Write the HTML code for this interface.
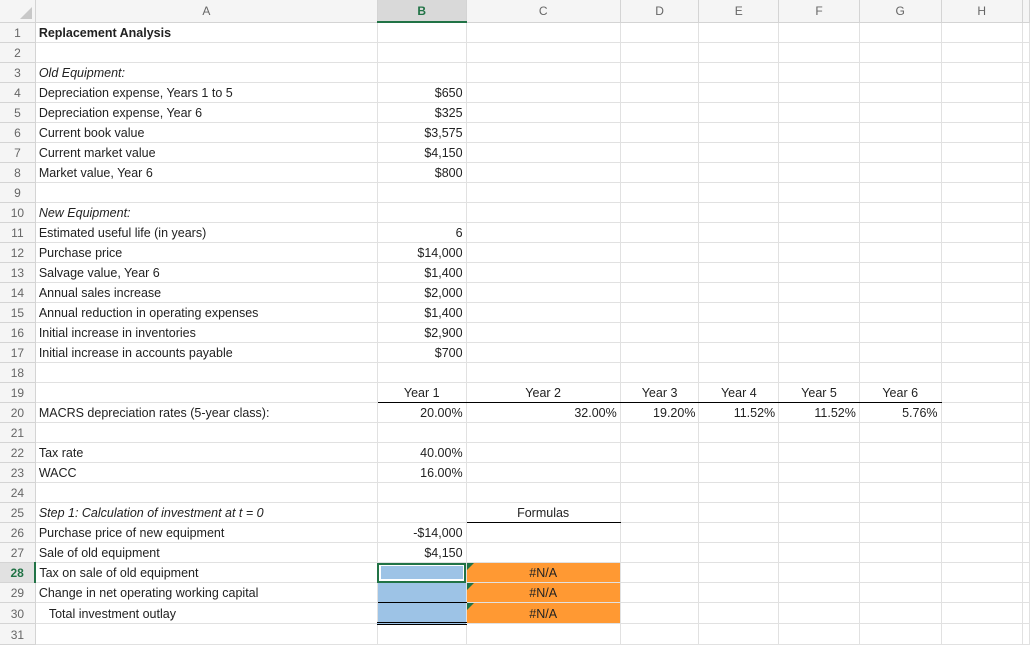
<!DOCTYPE html>
<html><head><meta charset="utf-8"><style>
body{margin:0;width:1031px;height:635px;overflow:hidden;background:#fff;font-family:"Liberation Sans",Arial,sans-serif;font-size:12.5px;color:#222}
table{border-collapse:collapse;table-layout:fixed;position:absolute;left:-1px;top:-1px}
td{border:1px solid #e1e1e1;height:19px;padding:0 3px;white-space:nowrap;overflow:visible;vertical-align:bottom;line-height:18px}
tr.h td{height:21px;background:#f5f5f5;color:#666;text-align:center;font-size:12px;vertical-align:middle;border-color:#d4d4d4}
td.n{background:#f5f5f5;color:#666;text-align:center;font-size:12px;border-color:#d4d4d4;padding:0}
.r{text-align:right}.c{text-align:center}.i{font-style:italic}.b{font-weight:bold}
.ul{border-bottom:1px solid #000}
.blue{background:#9dc3e6}
.or{background:#ff9933;text-align:center;position:relative}
.or::before{content:"";position:absolute;left:0;top:0;border-top:7px solid #217346;border-right:7px solid transparent}
</style></head><body>
<table>
<colgroup><col style="width:36px"><col style="width:343px"><col style="width:89px"><col style="width:155px"><col style="width:79px"><col style="width:80px"><col style="width:81px"><col style="width:82px"><col style="width:82px"><col style="width:5px"></colgroup>
<tr class="h"><td style="position:relative"><div style="position:absolute;right:3px;bottom:3px;border-bottom:12px solid #c8c8c8;border-left:12px solid transparent"></div></td><td>A</td><td style="background:#d9d9d9;color:#217346;font-weight:bold;border-bottom:2px solid #217346">B</td><td>C</td><td>D</td><td>E</td><td>F</td><td>G</td><td>H</td><td></td></tr>
<tr><td class="n">1</td><td class="b">Replacement Analysis</td><td></td><td></td><td></td><td></td><td></td><td></td><td></td><td></td></tr>
<tr><td class="n">2</td><td></td><td></td><td></td><td></td><td></td><td></td><td></td><td></td><td></td></tr>
<tr><td class="n">3</td><td class="i">Old Equipment:</td><td></td><td></td><td></td><td></td><td></td><td></td><td></td><td></td></tr>
<tr><td class="n">4</td><td>Depreciation expense, Years 1 to 5</td><td class="r">$650</td><td></td><td></td><td></td><td></td><td></td><td></td><td></td></tr>
<tr><td class="n">5</td><td>Depreciation expense, Year 6</td><td class="r">$325</td><td></td><td></td><td></td><td></td><td></td><td></td><td></td></tr>
<tr><td class="n">6</td><td>Current book value</td><td class="r">$3,575</td><td></td><td></td><td></td><td></td><td></td><td></td><td></td></tr>
<tr><td class="n">7</td><td>Current market value</td><td class="r">$4,150</td><td></td><td></td><td></td><td></td><td></td><td></td><td></td></tr>
<tr><td class="n">8</td><td>Market value, Year 6</td><td class="r">$800</td><td></td><td></td><td></td><td></td><td></td><td></td><td></td></tr>
<tr><td class="n">9</td><td></td><td></td><td></td><td></td><td></td><td></td><td></td><td></td><td></td></tr>
<tr><td class="n">10</td><td class="i">New Equipment:</td><td></td><td></td><td></td><td></td><td></td><td></td><td></td><td></td></tr>
<tr><td class="n">11</td><td>Estimated useful life (in years)</td><td class="r">6</td><td></td><td></td><td></td><td></td><td></td><td></td><td></td></tr>
<tr><td class="n">12</td><td>Purchase price</td><td class="r">$14,000</td><td></td><td></td><td></td><td></td><td></td><td></td><td></td></tr>
<tr><td class="n">13</td><td>Salvage value, Year 6</td><td class="r">$1,400</td><td></td><td></td><td></td><td></td><td></td><td></td><td></td></tr>
<tr><td class="n">14</td><td>Annual sales increase</td><td class="r">$2,000</td><td></td><td></td><td></td><td></td><td></td><td></td><td></td></tr>
<tr><td class="n">15</td><td>Annual reduction in operating expenses</td><td class="r">$1,400</td><td></td><td></td><td></td><td></td><td></td><td></td><td></td></tr>
<tr><td class="n">16</td><td>Initial increase in inventories</td><td class="r">$2,900</td><td></td><td></td><td></td><td></td><td></td><td></td><td></td></tr>
<tr><td class="n">17</td><td>Initial increase in accounts payable</td><td class="r">$700</td><td></td><td></td><td></td><td></td><td></td><td></td><td></td></tr>
<tr><td class="n">18</td><td></td><td></td><td></td><td></td><td></td><td></td><td></td><td></td><td></td></tr>
<tr><td class="n">19</td><td></td><td class="c ul">Year 1</td><td class="c ul">Year 2</td><td class="c ul">Year 3</td><td class="c ul">Year 4</td><td class="c ul">Year 5</td><td class="c ul">Year 6</td><td></td><td></td></tr>
<tr><td class="n">20</td><td>MACRS depreciation rates (5-year class):</td><td class="r">20.00%</td><td class="r">32.00%</td><td class="r">19.20%</td><td class="r">11.52%</td><td class="r">11.52%</td><td class="r">5.76%</td><td></td><td></td></tr>
<tr><td class="n">21</td><td></td><td></td><td></td><td></td><td></td><td></td><td></td><td></td><td></td></tr>
<tr><td class="n">22</td><td>Tax rate</td><td class="r">40.00%</td><td></td><td></td><td></td><td></td><td></td><td></td><td></td></tr>
<tr><td class="n">23</td><td>WACC</td><td class="r">16.00%</td><td></td><td></td><td></td><td></td><td></td><td></td><td></td></tr>
<tr><td class="n">24</td><td></td><td></td><td></td><td></td><td></td><td></td><td></td><td></td><td></td></tr>
<tr><td class="n">25</td><td class="i">Step 1: Calculation of investment at t = 0</td><td></td><td class="c ul">Formulas</td><td></td><td></td><td></td><td></td><td></td><td></td></tr>
<tr><td class="n">26</td><td>Purchase price of new equipment</td><td class="r">-$14,000</td><td></td><td></td><td></td><td></td><td></td><td></td><td></td></tr>
<tr><td class="n">27</td><td>Sale of old equipment</td><td class="r">$4,150</td><td></td><td></td><td></td><td></td><td></td><td></td><td></td></tr>
<tr><td class="n" style="background:#e1e1e1;color:#217346;font-weight:bold;border-right:2px solid #217346">28</td><td>Tax on sale of old equipment</td><td class="blue" style="outline:2px solid #217346;outline-offset:-2px;box-shadow:inset 0 0 0 3px #fff"></td><td class="or">#N/A</td><td></td><td></td><td></td><td></td><td></td><td></td></tr>
<tr><td class="n">29</td><td>Change in net operating working capital</td><td class="blue" style="border-bottom:1px solid #000"></td><td class="or">#N/A</td><td></td><td></td><td></td><td></td><td></td><td></td></tr>
<tr><td class="n">30</td><td style="padding-left:13px">Total investment outlay</td><td class="blue" style="border-bottom:3px double #000"></td><td class="or">#N/A</td><td></td><td></td><td></td><td></td><td></td><td></td></tr>
<tr><td class="n">31</td><td></td><td></td><td></td><td></td><td></td><td></td><td></td><td></td><td></td></tr>
</table>
</body></html>
